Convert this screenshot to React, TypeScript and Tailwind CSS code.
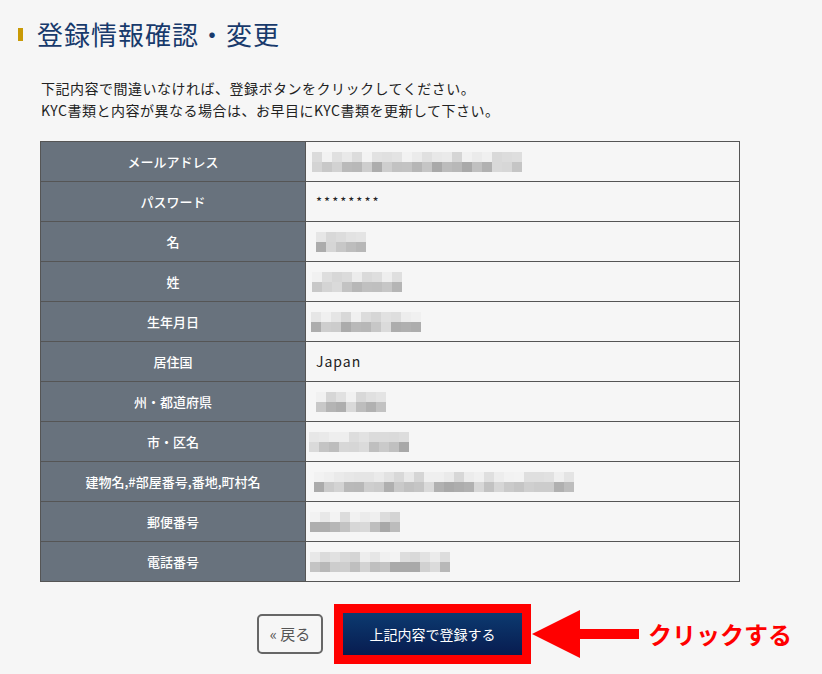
import React from "react";

type Row = { label: string; value?: string; mosaic?: { ml: string; blocks: number; seed: number } };

const rows: Row[] = [
  { label: "メールアドレス", mosaic: { ml: "ml-[6px]", blocks: 21, seed: 3 } },
  { label: "パスワード", value: "********" },
  { label: "名", mosaic: { ml: "ml-[10px]", blocks: 5, seed: 7 } },
  { label: "姓", mosaic: { ml: "ml-[6px]", blocks: 9, seed: 11 } },
  { label: "生年月日", mosaic: { ml: "ml-[5px]", blocks: 11, seed: 13 } },
  { label: "居住国", value: "Japan" },
  { label: "州・都道府県", mosaic: { ml: "ml-[10px]", blocks: 7, seed: 17 } },
  { label: "市・区名", mosaic: { ml: "ml-[3px]", blocks: 10, seed: 19 } },
  { label: "建物名,#部屋番号,番地,町村名", mosaic: { ml: "ml-[8px]", blocks: 26, seed: 23 } },
  { label: "郵便番号", mosaic: { ml: "ml-[4px]", blocks: 9, seed: 29 } },
  { label: "電話番号", mosaic: { ml: "ml-[4px]", blocks: 14, seed: 31 } },
];

function rand(seed: number) {
  let s = seed * 9301 + 49297;
  return () => {
    s = (s * 9301 + 49297) % 233280;
    return s / 233280;
  };
}

function Mosaic({ blocks, seed, ml }: { blocks: number; seed: number; ml: string }) {
  const r = rand(seed);
  const top = Array.from({ length: blocks }, () => Math.round(212 + r() * 32));
  const bottom = Array.from({ length: blocks }, () => Math.round(168 + r() * 52));
  return (
    <div className={`flex flex-col ${ml}`}>
      <div className="flex">
        {top.map((v, i) => (
          <div key={i} className="w-[10px] h-[10px]" style={{ backgroundColor: `rgb(${v},${v},${v})` }} />
        ))}
      </div>
      <div className="flex">
        {bottom.map((v, i) => (
          <div key={i} className="w-[10px] h-[10px]" style={{ backgroundColor: `rgb(${v},${v},${v})` }} />
        ))}
      </div>
    </div>
  );
}

export default function App() {
  return (
    <div className="min-h-[674px] w-full bg-[#f6f6f6] font-['Noto_Sans_CJK_JP','Noto_Sans',sans-serif] text-[#222]">
      <div className="flex items-center pl-[18px] pt-[16px] h-[52px]">
        <div className="w-[5px] h-[13px] bg-[#c99a06]" />
        <h1 className="ml-[14px] text-[26px] leading-[36px] text-[#183a6c] tracking-[1px]">登録情報確認・変更</h1>
      </div>
      <div className="pl-[41px] mt-[25px] text-[14px] leading-[22px] tracking-[0.5px] text-[#222]">
        <p>下記内容で間違いなければ、登録ボタンをクリックしてください。</p>
        <p>KYC書類と内容が異なる場合は、お早目にKYC書類を更新して下さい。</p>
      </div>
      <div className="pl-[40px] mt-[20px]">
        <table className="w-[700px] border-collapse">
          <tbody>
            {rows.map((row) => (
              <tr key={row.label} className="h-[40px]">
                <td className="w-[265px] border border-[#555] bg-[#68727d] text-white text-[13px] font-medium text-center p-0">
                  {row.label}
                </td>
                <td className="border border-[#555] bg-[#f6f6f6] p-0 text-[13px]">
                  {row.mosaic ? (
                    <Mosaic ml={row.mosaic.ml} blocks={row.mosaic.blocks} seed={row.mosaic.seed} />
                  ) : (
                    <span className={`pl-[10px] ${row.value === "Japan" ? "tracking-[1px] text-[14px]" : "tracking-[2px]"}`}>{row.value}</span>
                  )}
                </td>
              </tr>
            ))}
          </tbody>
        </table>
      </div>
      <div className="flex items-center pl-[257px] mt-[22px]">
        <button className="w-[66px] h-[40px] rounded-[5px] border-2 border-[#666] bg-[#f6f6f6] text-[15px] text-[#555] flex items-center justify-center">
          « 戻る
        </button>
        <div className="ml-[11px] border-[9px] border-[#ff0000]">
          <button className="w-[179px] h-[42px] bg-gradient-to-b from-[#0c3a70] to-[#081c50] text-white text-[14px] flex items-center justify-center">
            上記内容で登録する
          </button>
        </div>
        <svg width="107" height="50" viewBox="0 0 107 50" className="ml-[1px]">
          <polygon points="0,25 48,1 48,49" fill="#ff0000" />
          <rect x="47" y="20" width="60" height="10" fill="#ff0000" />
        </svg>
        <span className="ml-[9px] text-[24px] font-bold text-[#ff0000] leading-none">クリックする</span>
      </div>
    </div>
  );
}
